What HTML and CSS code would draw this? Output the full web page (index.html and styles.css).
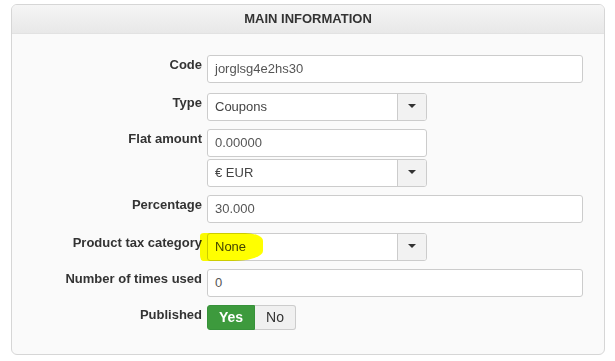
FILE: index.html
```html
<!DOCTYPE html>
<html lang="en">
<head>
    <meta charset="UTF-8">
    <meta name="viewport" content="width=device-width, initial-scale=1.0">
    <title>Coupon - Main information</title>
    <link rel="stylesheet" href="styles.css">
</head>
<body>
    <div class="panel">
        <div class="panel-header">MAIN INFORMATION</div>

        <div class="panel-body">
            <!-- Code -->
            <div class="control-group">
                <label class="control-label">Code</label>
                <div class="controls">
                    <div class="input">jorglsg4e2hs30</div>
                </div>
            </div>

            <!-- Type -->
            <div class="control-group select-group">
                <label class="control-label">Type</label>
                <div class="controls">
                    <div class="select">
                        <span class="select-value">Coupons</span>
                        <span class="select-btn"><b class="caret"></b></span>
                    </div>
                </div>
            </div>

            <!-- Flat amount + currency -->
            <div class="control-group">
                <label class="control-label">Flat amount</label>
                <div class="controls stacked">
                    <div class="input input-short">0.00000</div>
                    <div class="select">
                        <span class="select-value">€ EUR</span>
                        <span class="select-btn"><b class="caret"></b></span>
                    </div>
                </div>
            </div>

            <div class="control-group">
                <label class="control-label">Percentage</label>
                <div class="controls">
                    <div class="input">30.000</div>
                </div>
            </div>

            <div class="control-group select-group">
                <label class="control-label">Product tax category</label>
                <div class="controls">
                    <div class="select">
                        <span class="select-value">None</span>
                        <span class="select-btn"><b class="caret"></b></span>
                    </div>
                    <span class="marker"></span> <!-- yellow highlighter from the screenshot -->
                </div>
            </div>

            <div class="control-group">
                <label class="control-label">Number of times used</label>
                <div class="controls">
                    <div class="input">0</div>
                </div>
            </div>

            <div class="control-group">
                <label class="control-label">Published</label>
                <div class="controls">
                    <div class="btn-group">
                        <span class="btn btn-yes">Yes</span>
                        <span class="btn btn-no">No</span>
                    </div>
                </div>
            </div>
        </div>
    </div>
</body>
</html>
```

FILE: styles.css
```css
body {
    margin: 0;
    padding: 4px 10px 0 11px;
    background-color: #fff;
    font-family: 'Liberation Sans', Arial, sans-serif;
    font-size: 13px;
    color: #333;
}
.panel {
    width: 592px;
    height: 349px;
    border: 1px solid #d6d6d6;
    border-radius: 6px;
    background: #fafafa;
    overflow: hidden;
}
.panel-header {
    height: 28px;
    line-height: 28px;
    text-align: center;
    font-weight: bold;
    font-size: 13px;
    color: #333;
    background: linear-gradient(#f5f5f5, #e8e8e8);
    border-bottom: 1px solid #e2e2e2;
}
.panel-body {
    padding-top: 21px;
}
.control-group {
    display: flex;
    margin-bottom: 8px;
}
.select-group {
    margin-top: 10px;
}
.control-label {
    width: 190px;
    margin-right: 5px;
    padding-top: 1px;
    line-height: 18px;
    text-align: right;
    font-weight: bold;
    color: #333;
}
.controls {
    position: relative;
}
.stacked {
    display: flex;
    flex-direction: column;
    gap: 2px;
}
.input {
    box-sizing: border-box;
    width: 376px;
    height: 28px;
    line-height: 26px;
    padding: 0 7px;
    border: 1px solid #ccc;
    border-radius: 3px;
    background: #fff;
    color: #555;
}
.input-short {
    width: 220px;
}
.select {
    box-sizing: border-box;
    display: flex;
    width: 220px;
    height: 28px;
    border: 1px solid #ccc;
    border-radius: 3px;
    background: #fff;
    color: #444;
    overflow: hidden;
}
.select-value {
    flex: 1;
    line-height: 26px;
    padding-left: 7px;
}
.select-btn {
    width: 28px;
    border-left: 1px solid #ccc;
    background: #f2f2f2;
    display: flex;
    align-items: center;
    justify-content: center;
    padding-bottom: 2px;
}
.caret {
    width: 0;
    height: 0;
    border-top: 4px solid #333;
    border-left: 4px solid transparent;
    border-right: 4px solid transparent;
}
.marker {
    position: absolute;
    left: -7px;
    top: 0;
    width: 63px;
    height: 28px;
    background: #ffff00;
    border-radius: 4px 18px 30px 3px / 3px 8px 10px 6px;
    mix-blend-mode: multiply;
}
.btn-group {
    display: flex;
}
.btn {
    box-sizing: border-box;
    height: 25px;
    line-height: 23px;
    font-size: 14px;
    text-align: center;
    border: 1px solid #ccc;
}
.btn-yes {
    width: 48px;
    background: #3d9a3d;
    border-color: #37923a;
    color: #fff;
    font-weight: bold;
    border-radius: 3px 0 0 3px;
}
.btn-no {
    width: 41px;
    background: #f0f0f0;
    border-left: 0;
    color: #333;
    border-radius: 0 3px 3px 0;
}
```
